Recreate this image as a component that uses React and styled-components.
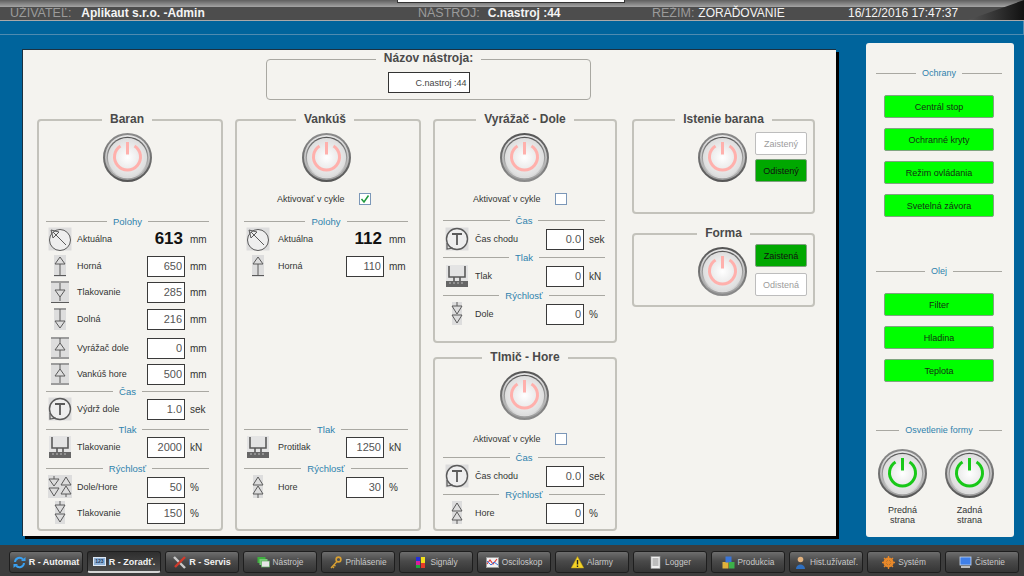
import React, { useId } from 'react';
import styled, { createGlobalStyle } from 'styled-components';

const GlobalStyle = createGlobalStyle`
  html, body {
    margin: 0;
    padding: 0;
    overflow: hidden;
    background: #00649c;
    font-family: 'Liberation Sans', Arial, sans-serif;
  }
`;

const Page = styled.div`
  width: 1024px;
  height: 576px;
  display: flex;
  flex-direction: column;
  overflow: hidden;
  background: #00649c;
`;

/* top status bar */
const TopBar = styled.header`
  position: relative;
  height: 21px;
  flex: none;
  box-sizing: border-box;
  padding-top: 7px;
  background: linear-gradient(#5f5f5f, #a5a5a5 7px, #4d4d4d 7px);
  border-bottom: 1px solid #a9a9a9;
  overflow: hidden;

  &::after {
    content: '';
    position: absolute;
    right: 0;
    top: 0;
    width: 56px;
    height: 20px;
    background: linear-gradient(to right, #555, #111);
    clip-path: polygon(100% 0, 100% 100%, 0 100%);
  }
`;

const TopTab = styled.div`
  position: absolute;
  left: 397px;
  top: 0;
  width: 228px;
  height: 3px;
  box-sizing: border-box;
  background: #fff;
  border: 1px solid #333;
  border-top: 0;
`;

const StatusRow = styled.div`
  display: grid;
  grid-template-columns: 408px 234px 196px auto;
  padding-left: 10px;
  height: 13px;
  align-items: center;
`;

const StatusGroup = styled.div`
  display: flex;
  gap: ${(p) => p.$gap || 6}px;
  font-size: 12px;
  line-height: 13px;
  white-space: nowrap;
`;

const StatusLabel = styled.span`
  color: #9b9b9b;
  font-size: 12.5px;
`;

const StatusValue = styled.span`
  color: #f4f4f4;
  font-weight: ${(p) => (p.$bold ? 'bold' : 'normal')};
`;

const Stripe = styled.div`
  height: 14px;
  flex: none;
  box-sizing: border-box;
  border-bottom: 1px solid #4f8bb0;
  border-right: 1px solid #4f8bb0;
`;

const Content = styled.div`
  flex: 1;
  display: flex;
  align-items: flex-start;
  padding: 8px 0 0 22px;
  min-height: 0;
`;

const MainPanel = styled.main`
  width: 814px;
  height: 487px;
  margin-top: 6px;
  box-sizing: border-box;
  padding: 1px 0 0 14px;
  background: #f4f3ef;
  border-top: 1px solid #1c3140;
  border-left: 1px solid #1c3140;
  box-shadow: 3px 3px 0 #000;
  display: flex;
  flex-direction: column;
`;

const NameWrap = styled.div`
  display: flex;
  padding-left: 229px;
`;

const Columns = styled.div`
  display: grid;
  grid-template-columns: 186px 186px 184px 186px;
  column-gap: 12px;
  margin-top: 12px;
`;

const Stack = styled.div`
  display: grid;
  grid-template-rows: ${(p) => p.$rows};
  row-gap: ${(p) => p.$gap}px;
  padding-left: ${(p) => p.$indent || 0}px;
`;

const Panel = styled.fieldset`
  margin: 0;
  padding: 0;
  min-width: 0;
  box-sizing: border-box;
  height: ${(p) => p.$height}px;
  width: ${(p) => (p.$width ? `${p.$width}px` : 'auto')};
  border: ${(p) => (p.$thin ? '1px solid #a9a8a2' : '2px solid #c3c2bb')};
  border-radius: 4px;
`;

const PanelTitle = styled.legend`
  margin: ${(p) => (p.$left ? `0 0 0 ${p.$left}px` : '0 auto')};
  padding: 0 8px;
  height: 16px;
  line-height: 14px;
  font-size: 12px;
  font-weight: bold;
  color: #4a4a4a;
  white-space: nowrap;
`;

const NameBody = styled.div`
  display: flex;
  justify-content: center;
  padding-top: 5px;
`;

const NameField = styled.input`
  width: 82px;
  height: 21px;
  box-sizing: border-box;
  padding: 0 2px 0 0;
  border: 1px solid #333;
  background: #fff;
  color: #444;
  font: 9px 'Liberation Sans', Arial, sans-serif;
  text-align: right;
  outline: none;
`;

const Body = styled.div`
  --row-cols: ${(p) => p.$cols};
  padding: 0 ${(p) => p.$right}px 0 ${(p) => p.$left}px;
`;

const Head = styled.div`
  display: flex;
  justify-content: center;
  height: 61px;
  box-sizing: border-box;
  padding-top: 5px;
`;

const ActivateRow = styled.div`
  display: flex;
  align-items: center;
  height: 20px;
  margin-top: ${(p) => p.$mt || 0}px;
  padding-left: ${(p) => p.$left}px;
`;

const ActivateLabel = styled.span`
  width: 82px;
  font-size: 9px;
  color: #333;
  white-space: nowrap;
`;

const CheckBox = styled.span`
  width: 12px;
  height: 12px;
  box-sizing: border-box;
  border: 1px solid #7b97b8;
  background: #fff;
  display: flex;
  align-items: center;
  justify-content: center;
`;

const SectionRow = styled.div`
  display: flex;
  align-items: center;
  gap: ${(p) => p.$gap || 6}px;
  height: 12px;
  margin-top: ${(p) => p.$mt || 0}px;
  font-size: ${(p) => p.$size || 9.5}px;
  color: #2f82ad;

  &::before,
  &::after {
    content: '';
    flex: 1;
    height: 1px;
    background: #a9a8a2;
  }
`;

const Row = styled.div`
  display: grid;
  grid-template-columns: var(--row-cols);
  align-items: center;
  height: 21px;
  margin-top: ${(p) => p.$mt || 0}px;
`;

const IconCell = styled.span`
  display: block;
  height: 24px;
  padding-left: 2px;
`;

const RowLabel = styled.span`
  font-size: 9px;
  color: #333;
  white-space: nowrap;
`;

const ValueInput = styled.input`
  width: 38px;
  height: 21px;
  box-sizing: border-box;
  padding: 0 2px 0 0;
  border: 1px solid #3a3a3a;
  background: #fff;
  color: #555;
  font: 11px 'Liberation Sans', Arial, sans-serif;
  text-align: right;
  outline: none;
`;

const Readout = styled.span`
  font-size: 17px;
  font-weight: bold;
  color: #111;
  text-align: right;
  padding-right: 2px;
`;

const Unit = styled.span`
  padding-left: 5px;
  font-size: 10px;
  color: #333;
`;

const LockBody = styled.div`
  display: flex;
  justify-content: flex-end;
  align-items: flex-start;
  gap: 8px;
  padding: ${(p) => p.$top}px 6px 0 0;
`;

const PowerOffset = styled.div`
  margin-top: ${(p) => p.$top}px;
  height: 49px;
`;

const LockButtons = styled.div`
  display: flex;
  flex-direction: column;
  gap: ${(p) => p.$gap}px;
`;

const LockButton = styled.div`
  width: 52px;
  height: 23px;
  box-sizing: border-box;
  border-radius: 2px;
  border: 1px solid ${(p) => (p.$on ? '#7f9f7f' : '#bdbdbd')};
  background: ${(p) => (p.$on ? '#00a800' : '#fff')};
  color: ${(p) => (p.$on ? '#111' : '#9c9c9c')};
  font-size: 9px;
  display: flex;
  align-items: center;
  justify-content: center;
`;

/* right column */
const SidePanel = styled.aside`
  width: 148px;
  height: 494px;
  margin-left: 30px;
  box-sizing: border-box;
  padding: 24px 12px 0 10px;
  background: #f4f3ef;
  border-radius: 3px;
`;

const SideButtons = styled.div`
  display: flex;
  flex-direction: column;
  align-items: center;
  gap: 10px;
  margin-top: 16px;
`;

const GreenButton = styled.div`
  width: 110px;
  height: 23px;
  box-sizing: border-box;
  border-radius: 2px;
  border: 1px solid #7fa57f;
  background: #00ff00;
  color: #143014;
  font-size: 9px;
  display: flex;
  align-items: center;
  justify-content: center;
`;

const LightRow = styled.div`
  display: flex;
  gap: 18px;
  margin: 13px 0 0 2px;
`;

const LightItem = styled.div`
  width: 49px;
  display: flex;
  flex-direction: column;
  align-items: center;
  gap: 7px;
`;

const LightLabel = styled.span`
  font-size: 9px;
  line-height: 10px;
  color: #333;
  text-align: center;
`;

/* bottom navigation */
const Nav = styled.nav`
  height: 31px;
  flex: none;
  box-sizing: border-box;
  display: flex;
  gap: 4px;
  padding: 6px 0 0 9px;
  background: #3d3d3d;
`;

const NavButton = styled.div`
  width: 74px;
  height: 22px;
  box-sizing: border-box;
  display: flex;
  align-items: center;
  justify-content: center;
  gap: 3px;
  border-radius: 3px;
  border: 1px solid #1e1e1e;
  border-bottom: ${(p) => (p.$active ? '2px solid #d5d5d5' : '1px solid #1e1e1e')};
  background: ${(p) =>
    p.$active
      ? 'linear-gradient(#2f2f2f, #4c4c4c)'
      : 'linear-gradient(#6e6e6e, #4a4a4a 45%, #353535)'};
  color: ${(p) => (p.$bold ? '#f2f2f2' : '#c9c9c9')};
  font-size: ${(p) => (p.$bold ? 9 : 8.3)}px;
  font-weight: ${(p) => (p.$bold ? 'bold' : 'normal')};
  white-space: nowrap;
`;

const NumberTag = styled.span`
  width: 13px;
  height: 9px;
  background: #8fb2d8;
  border: 1px solid #dfe9f5;
  box-sizing: border-box;
  color: #17365c;
  font-size: 5px;
  font-weight: bold;
  line-height: 7px;
  text-align: center;
`;

const PowerSvg = styled.svg`
  display: block;
  width: 49px;
  height: 49px;
`;

const MachineSvg = styled.svg`
  display: block;
  width: 24px;
  height: 24px;
`;

const NavSvg = styled.svg`
  flex: none;
  width: 13px;
  height: 13px;
`;

const Power = ({ on, dark }) => {
  const id = useId();
  const color = on ? '#18c818' : '#ffb0ac';
  return (
    <PowerSvg viewBox="0 0 49 49">
      <defs>
        <linearGradient id={`${id}o`} x1="0" y1="0" x2="0" y2="1">
          <stop offset="0" stopColor={dark ? '#555' : '#8c8c8c'} />
          <stop offset="1" stopColor={dark ? '#8c8c8c' : '#555'} />
        </linearGradient>
        <linearGradient id={`${id}m`} x1="0" y1="0" x2="0" y2="1">
          <stop offset="0" stopColor="#e6e6e6" />
          <stop offset="1" stopColor="#9c9c9c" />
        </linearGradient>
        <linearGradient id={`${id}i`} x1="0" y1="0" x2="0" y2="1">
          <stop offset="0" stopColor="#555" />
          <stop offset="1" stopColor="#e0e0e0" />
        </linearGradient>
        <radialGradient id={`${id}c`} cx="0.5" cy="0.5" r="0.55">
          <stop offset="0" stopColor="#ffffff" />
          <stop offset="1" stopColor="#dadada" />
        </radialGradient>
      </defs>
      <circle cx="24.5" cy="24.5" r="24.5" fill={`url(#${id}o)`} />
      <circle cx="24.5" cy="24.5" r="22.5" fill={`url(#${id}m)`} />
      <circle cx="24.5" cy="24.5" r="20.8" fill={`url(#${id}i)`} />
      <circle cx="24.5" cy="24.5" r="19.6" fill={`url(#${id}c)`} />
      <path d="M17.5 13 A13 13 0 1 0 31.5 13" fill="none" stroke={color} strokeWidth="3" />
      <path d="M24.5 9 V21.5" stroke={color} strokeWidth="3" />
    </PowerSvg>
  );
};

const G = '#5a5a5a';
const machineIcons = {
  gauge: (
    <>
      <rect x="0.5" y="0.5" width="23" height="23" fill="#ddd" />
      <circle cx="12" cy="13" r="10.5" fill="#eee" stroke={G} />
      <path d="M5 5 L18 18 M3 3 L11 5 L5 11 Z" fill="none" stroke={G} />
    </>
  ),
  up: (
    <>
      <rect x="6" y="1" width="12" height="22" fill="#ddd" />
      <path d="M12 3 L17 10 H7 Z M12 10 V21 M6 21.5 H18" fill="none" stroke={G} />
    </>
  ),
  press: (
    <>
      <rect x="3" y="1" width="18" height="22" fill="#ddd" />
      <path d="M12 3 V10 M7 10 H17 L12 17 L7 10 M12 17 V21 M3 2 H21 M3 22.5 H21" fill="none" stroke={G} />
    </>
  ),
  down: (
    <>
      <rect x="6" y="1" width="12" height="22" fill="#ddd" />
      <path d="M6 2 H18 M12 2 V14 M7 14 H17 L12 21 Z" fill="none" stroke={G} />
    </>
  ),
  eject: (
    <>
      <rect x="3" y="1" width="18" height="22" fill="#ddd" />
      <path d="M3 2 H21 M12 2 V7 L17 14 H7 L12 7 M12 14 V21 M3 22 H21" fill="none" stroke={G} />
    </>
  ),
  timer: (
    <>
      <rect x="0.5" y="0.5" width="23" height="23" fill="#ddd" />
      <circle cx="12" cy="12" r="10.5" fill="#eee" stroke={G} strokeWidth="1.4" />
      <path d="M7 7 H17 M12 7 V18" fill="none" stroke={G} strokeWidth="1.8" />
      <path d="M2 16 L2 22 L8 21" fill="none" stroke={G} strokeWidth="1.2" />
    </>
  ),
  pressure: (
    <>
      <rect x="1" y="1" width="22" height="22" fill="#e4e4e4" />
      <path d="M4 2 V13 H20 V2 M9 13 V17 M15 13 V17" fill="none" stroke={G} strokeWidth="1.6" />
      <rect x="1" y="17" width="22" height="6" fill="#666" />
      <path d="M4 19 H20" stroke="#bbb" strokeDasharray="2 2" />
    </>
  ),
  speedBoth: (
    <>
      <rect x="0" y="0" width="24" height="23" fill="#ddd" />
      <path d="M6 1 V4 M1 4 H11 L6 11 Z M1 13 H11 L6 21 Z" fill="none" stroke={G} />
      <path d="M18 2 L23 10 H13 Z M18 11 L23 19 H13 Z M18 19 V22" fill="none" stroke={G} />
    </>
  ),
  speedDown: (
    <>
      <rect x="7" y="0" width="10" height="23" fill="#ddd" />
      <path d="M12 0 V4 M7 4 H17 L12 12 Z M7 13 H17 L12 21 Z" fill="none" stroke={G} />
    </>
  ),
  speedUp: (
    <>
      <rect x="7" y="0" width="10" height="23" fill="#ddd" />
      <path d="M12 2 L17 10 H7 Z M12 11 L17 19 H7 Z M12 19 V23" fill="none" stroke={G} />
    </>
  ),
};

const MachineIcon = ({ name }) => (
  <IconCell>
    <MachineSvg viewBox="0 0 24 24">{machineIcons[name]}</MachineSvg>
  </IconCell>
);

const NavIcon = ({ children }) => <NavSvg viewBox="0 0 13 13">{children}</NavSvg>;

const navItems = [
  {
    label: 'R - Automat',
    bold: true,
    icon: (
      <NavIcon>
        <path d="M2 6 A4.5 4.5 0 0 1 10 3.5" fill="none" stroke="#3aa0f0" strokeWidth="2" />
        <path d="M11 7 A4.5 4.5 0 0 1 3 9.5" fill="none" stroke="#3aa0f0" strokeWidth="2" />
        <path d="M8 5 H12.5 V1 Z M5 8 H0.5 V12 Z" fill="#3aa0f0" />
      </NavIcon>
    ),
  },
  { label: 'R - Zorad\u0165.', bold: true, active: true, tag: true },
  {
    label: 'R - Servis',
    bold: true,
    icon: (
      <NavIcon>
        <path d="M1 1 L12 12" stroke="#c9c9c9" strokeWidth="2.4" />
        <path d="M12 1 L2 11" stroke="#d03a2c" strokeWidth="2.4" />
      </NavIcon>
    ),
  },
  {
    label: 'N\u00e1stroje',
    icon: (
      <NavIcon>
        <rect x="0.5" y="1" width="8" height="6" fill="#3fae3f" />
        <rect x="2.5" y="3" width="8" height="6" fill="#77cc77" />
        <rect x="4.5" y="5" width="8" height="6" fill="#e6e6e6" stroke="#5fae5f" strokeWidth="0.7" />
      </NavIcon>
    ),
  },
  {
    label: 'Prihl\u00e1senie',
    icon: (
      <NavIcon>
        <circle cx="9.5" cy="3.5" r="2.4" fill="none" stroke="#d9a032" strokeWidth="1.6" />
        <path d="M8 5.5 L2 12 M3.5 10.5 L5 12 M5 8.8 L6.4 10.2" stroke="#d9a032" strokeWidth="1.4" fill="none" />
      </NavIcon>
    ),
  },
  {
    label: 'Sign\u00e1ly',
    icon: (
      <NavIcon>
        <rect x="2" y="1" width="4" height="4" fill="#2430d8" />
        <rect x="2" y="5" width="4" height="4" fill="#d81f9c" />
        <rect x="2" y="9" width="4" height="3" fill="#1ea83a" />
        <rect x="7" y="1" width="4" height="6" fill="#f2e01c" />
        <rect x="7" y="7" width="4" height="5" fill="#e53a2a" />
      </NavIcon>
    ),
  },
  {
    label: 'Osciloskop',
    icon: (
      <NavIcon>
        <rect x="0.5" y="1.5" width="12" height="10" fill="#f2f2f2" stroke="#9a9a9a" />
        <path d="M1 8 L4 4 L7 8 L11 3" fill="none" stroke="#e23a3a" strokeWidth="1.2" />
        <path d="M1 5 L5 9 L8 6 L12 9" fill="none" stroke="#3a78e2" />
      </NavIcon>
    ),
  },
  {
    label: 'Alarmy',
    icon: (
      <NavIcon>
        <path d="M6.5 0.5 L12.8 12 H0.2 Z" fill="#f5d327" stroke="#b89a12" strokeWidth="0.5" />
        <path d="M6.5 4 V8.4 M6.5 9.4 V11" stroke="#222" strokeWidth="1.4" />
      </NavIcon>
    ),
  },
  {
    label: 'Logger',
    icon: (
      <NavIcon>
        <rect x="2" y="0.5" width="9" height="12" fill="#efefef" stroke="#9c9c9c" strokeWidth="0.6" />
        <path d="M3.5 3 H9.5 M3.5 5 H9.5 M3.5 7 H9.5 M3.5 9 H9.5" stroke="#8a8a8a" />
      </NavIcon>
    ),
  },
  {
    label: 'Produkcia',
    icon: (
      <NavIcon>
        <rect x="0.5" y="6" width="6" height="6.5" fill="#e0b13a" />
        <rect x="3.5" y="0.5" width="6" height="6" fill="#3a76d8" />
        <rect x="7" y="6" width="5.5" height="6.5" fill="#3cb04a" />
      </NavIcon>
    ),
  },
  {
    label: 'Hist.u\u017e\u00edvate\u013e.',
    icon: (
      <NavIcon>
        <circle cx="6.5" cy="3.5" r="2.8" fill="#e2b27e" />
        <path d="M2 13 C2 7 11 7 11 13 Z" fill="#2f6fc0" />
      </NavIcon>
    ),
  },
  {
    label: 'Syst\u00e9m',
    icon: (
      <NavIcon>
        <circle cx="6.5" cy="6.5" r="3.8" fill="none" stroke="#e8892a" strokeWidth="2.6" />
        <path d="M6.5 0 V13 M0 6.5 H13 M2 2 L11 11 M11 2 L2 11" stroke="#e8892a" strokeWidth="1.3" />
      </NavIcon>
    ),
  },
  {
    label: '\u010cistenie',
    icon: (
      <NavIcon>
        <rect x="1" y="1" width="11" height="8" fill="#3f7fe8" stroke="#c9d8ee" strokeWidth="0.8" />
        <rect x="2" y="10" width="9" height="2" fill="#bcbcbc" />
      </NavIcon>
    ),
  },
];

const baranRows = [
  { section: 'Polohy', mt: 26 },
  { icon: 'gauge', label: 'Aktu\u00e1lna', readout: '613', unit: 'mm' },
  { icon: 'up', label: 'Horn\u00e1', value: '650', unit: 'mm', mt: 6 },
  { icon: 'press', label: 'Tlakovanie', value: '285', unit: 'mm', mt: 5 },
  { icon: 'down', label: 'Doln\u00e1', value: '216', unit: 'mm', mt: 6 },
  { icon: 'eject', label: 'Vyr\u00e1\u017ea\u010d dole', value: '0', unit: 'mm', mt: 8 },
  { icon: 'eject', label: 'Vank\u00fa\u0161 hore', value: '500', unit: 'mm', mt: 5 },
  { section: '\u010cas', mt: 2 },
  { icon: 'timer', label: 'V\u00fddr\u017e dole', value: '1.0', unit: 'sek' },
  { section: 'Tlak', mt: 5 },
  { icon: 'pressure', label: 'Tlakovanie', value: '2000', unit: 'kN' },
  { section: 'R\u00fdchlos\u0165', mt: 6 },
  { icon: 'speedBoth', label: 'Dole/Hore', value: '50', unit: '%', mt: 1 },
  { icon: 'speedDown', label: 'Tlakovanie', value: '150', unit: '%', mt: 5 },
];

const vankusRows = [
  { section: 'Polohy', mt: 6 },
  { icon: 'gauge', label: 'Aktu\u00e1lna', readout: '112', unit: 'mm' },
  { icon: 'up', label: 'Horn\u00e1', value: '110', unit: 'mm', mt: 6 },
  { section: 'Tlak', mt: 148 },
  { icon: 'pressure', label: 'Protitlak', value: '1250', unit: 'kN' },
  { section: 'R\u00fdchlos\u0165', mt: 6 },
  { icon: 'speedUp', label: 'Hore', value: '30', unit: '%', mt: 1 },
];

const vyrazacRows = [
  { section: '\u010cas', mt: 5 },
  { icon: 'timer', label: '\u010cas chodu', value: '0.0', unit: 'sek', mt: 1 },
  { section: 'Tlak', mt: 3 },
  { icon: 'pressure', label: 'Tlak', value: '0', unit: 'kN', mt: 1 },
  { section: 'R\u00fdchlos\u0165', mt: 4 },
  { icon: 'speedDown', label: 'Dole', value: '0', unit: '%', mt: 1 },
];

const tlmicRows = [
  { section: '\u010cas', mt: 2 },
  { icon: 'timer', label: '\u010cas chodu', value: '0.0', unit: 'sek', mt: 1 },
  { section: 'R\u00fdchlos\u0165', mt: 3 },
  { icon: 'speedUp', label: 'Hore', value: '0', unit: '%', mt: 1 },
];

const Rows = ({ rows }) =>
  rows.map((row, i) =>
    row.section ? (
      <SectionRow key={i} $mt={row.mt}>
        {row.section}
      </SectionRow>
    ) : (
      <Row key={i} $mt={row.mt}>
        <MachineIcon name={row.icon} />
        <RowLabel>{row.label}</RowLabel>
        {row.readout ? <Readout>{row.readout}</Readout> : <ValueInput readOnly value={row.value} />}
        <Unit>{row.unit}</Unit>
      </Row>
    )
  );

const Activate = ({ checked, left, mt }) => (
  <ActivateRow $left={left} $mt={mt}>
    <ActivateLabel>Aktivovať v cykle</ActivateLabel>
    <CheckBox>
      {checked && (
        <svg width="10" height="10" viewBox="0 0 10 10">
          <path d="M1.5 5 L4 8 L8.5 1.5" fill="none" stroke="#1f9a3c" strokeWidth="1.5" />
        </svg>
      )}
    </CheckBox>
  </ActivateRow>
);

const App = () => (
  <Page>
    <GlobalStyle />
    <TopBar>
      <TopTab />
      <StatusRow>
        <StatusGroup $gap={10}>
          <StatusLabel>UŽIVATEĽ:</StatusLabel>
          <StatusValue $bold>Aplikaut s.r.o. -Admin</StatusValue>
        </StatusGroup>
        <StatusGroup $gap={8}>
          <StatusLabel>NÁSTROJ:</StatusLabel>
          <StatusValue $bold>C.nastroj :44</StatusValue>
        </StatusGroup>
        <StatusGroup $gap={4}>
          <StatusLabel>REŽIM:</StatusLabel>
          <StatusValue>ZORAĎOVANIE</StatusValue>
        </StatusGroup>
        <StatusGroup>
          <StatusValue>16/12/2016 17:47:37</StatusValue>
        </StatusGroup>
      </StatusRow>
    </TopBar>
    <Stripe />
    <Content>
      <MainPanel>
        <NameWrap>
          <Panel $width={325} $height={49} $thin>
            <PanelTitle>Názov nástroja:</PanelTitle>
            <NameBody>
              <NameField readOnly value="C.nastroj :44" />
            </NameBody>
          </Panel>
        </NameWrap>
        <Columns>
          <Panel $height={419}>
            <PanelTitle $left={63}>Baran</PanelTitle>
            <Body $cols="31px 70px 38px 1fr" $left={7} $right={12}>
              <Head>
                <Power />
              </Head>
              <Rows rows={baranRows} />
            </Body>
          </Panel>
          <Panel $height={419}>
            <PanelTitle $left={59}>Vankúš</PanelTitle>
            <Body $cols="34px 68px 38px 1fr" $left={7} $right={11}>
              <Head>
                <Power />
              </Head>
              <Activate checked left={33} />
              <Rows rows={vankusRows} />
            </Body>
          </Panel>
          <Stack $rows="231px 181px" $gap={7}>
            <Panel $height={231}>
              <PanelTitle>Vyrážač - Dole</PanelTitle>
              <Body $cols="32px 71px 38px 1fr" $left={8} $right={10}>
                <Head>
                  <Power dark />
                </Head>
                <Activate left={30} />
                <Rows rows={vyrazacRows} />
              </Body>
            </Panel>
            <Panel $height={181}>
              <PanelTitle>Tlmič - Hore</PanelTitle>
              <Body $cols="32px 71px 38px 1fr" $left={8} $right={10}>
                <Head>
                  <Power dark />
                </Head>
                <Activate left={30} mt={2} />
                <Rows rows={tlmicRows} />
              </Body>
            </Panel>
          </Stack>
          <Stack $rows="102px 81px" $gap={12} $indent={3}>
            <Panel $height={102}>
              <PanelTitle>Istenie barana</PanelTitle>
              <LockBody $top={4}>
                <PowerOffset $top={1}>
                  <Power />
                </PowerOffset>
                <LockButtons $gap={4}>
                  <LockButton>Zaistený</LockButton>
                  <LockButton $on>Odistený</LockButton>
                </LockButtons>
              </LockBody>
            </Panel>
            <Panel $height={81}>
              <PanelTitle>Forma</PanelTitle>
              <LockBody $top={2}>
                <PowerOffset $top={3}>
                  <Power dark />
                </PowerOffset>
                <LockButtons $gap={6}>
                  <LockButton $on>Zaistená</LockButton>
                  <LockButton>Odistená</LockButton>
                </LockButtons>
              </LockBody>
            </Panel>
          </Stack>
        </Columns>
      </MainPanel>
      <SidePanel>
        <SectionRow $size={9}>Ochrany</SectionRow>
        <SideButtons>
          <GreenButton>Centrál stop</GreenButton>
          <GreenButton>Ochranné kryty</GreenButton>
          <GreenButton>Režim ovládania</GreenButton>
          <GreenButton>Svetelná závora</GreenButton>
        </SideButtons>
        <SectionRow $size={9} $mt={48}>
          Olej
        </SectionRow>
        <SideButtons>
          <GreenButton>Filter</GreenButton>
          <GreenButton>Hladina</GreenButton>
          <GreenButton>Teplota</GreenButton>
        </SideButtons>
        <SectionRow $size={9} $mt={42}>
          Osvetlenie formy
        </SectionRow>
        <LightRow>
          <LightItem>
            <Power on />
            <LightLabel>
              Predná
              <br />
              strana
            </LightLabel>
          </LightItem>
          <LightItem>
            <Power on />
            <LightLabel>
              Zadná
              <br />
              strana
            </LightLabel>
          </LightItem>
        </LightRow>
      </SidePanel>
    </Content>
    <Nav>
      {navItems.map((item) => (
        <NavButton key={item.label} $bold={item.bold} $active={item.active}>
          {item.tag ? <NumberTag>123</NumberTag> : item.icon}
          {item.label}
        </NavButton>
      ))}
    </Nav>
  </Page>
);

export default App;
